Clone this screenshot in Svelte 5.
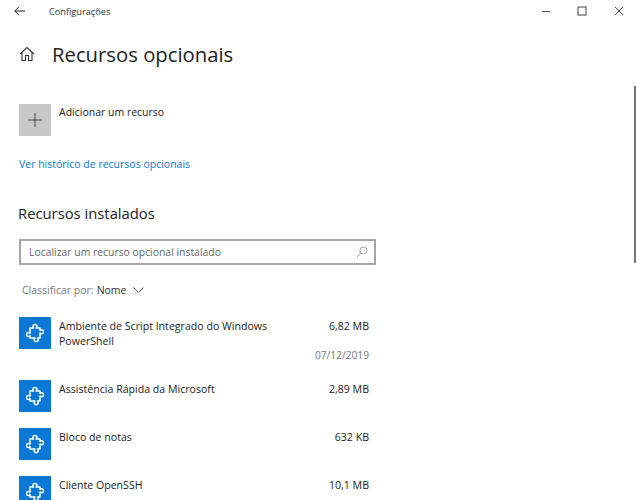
<script lang="ts">
  // Windows settings page: optional features list
  const features = [
    { name: 'Ambiente de Script Integrado do Windows PowerShell', size: '6,82 MB', date: '07/12/2019' },
    { name: 'Assistência Rápida da Microsoft', size: '2,89 MB' },
    { name: 'Bloco de notas', size: '632 KB' },
    { name: 'Cliente OpenSSH', size: '10,1 MB' }
  ];
</script>

<div class="window">
  <header class="titlebar">
    <svg class="back" width="11" height="10" viewBox="0 0 11 10" fill="none" stroke="#222" stroke-width="1">
      <path d="M11 5H.8M5 .7.8 5 5 9.3" />
    </svg>
    <span class="app-name">Configurações</span>
    <div class="controls">
      <svg width="10" height="10" viewBox="0 0 10 10" stroke="#555" fill="none"><path d="M1 5.5h8" /></svg>
      <svg width="10" height="10" viewBox="0 0 10 10" stroke="#444" fill="none"><rect x="1" y="1" width="8" height="8" /></svg>
      <svg width="10" height="10" viewBox="0 0 10 10" stroke="#444" fill="none"><path d="M1 1l8 8M9 1l-8 8" /></svg>
    </div>
  </header>

  <main class="content">
    <div class="page-head">
      <svg width="16" height="16" viewBox="0 0 16 16" fill="none" stroke="#333" stroke-width="1.1">
        <path d="M1 8 8 1.5 15 8M3 6.5V14.5H6.5V9.5H9.5V14.5H13V6.5" />
      </svg>
      <h1>Recursos opcionais</h1>
    </div>

    <div class="add">
      <div class="tile tile-add">
        <svg width="14" height="14" viewBox="0 0 14 14" stroke="#444" stroke-width="1"><path d="M7 0v14M0 7h14" /></svg>
      </div>
      <span class="add-label">Adicionar um recurso</span>
    </div>

    <a class="history" href="#history">Ver histórico de recursos opcionais</a>

    <h2>Recursos instalados</h2>

    <div class="search">
      <span>Localizar um recurso opcional instalado</span>
      <svg width="12" height="12" viewBox="0 0 12 12" fill="none" stroke="#999" stroke-width="0.9">
        <circle cx="7.5" cy="4.5" r="3.5" /><path d="M5 7 1 11" />
      </svg>
    </div>

    <div class="sort">
      <span class="sort-label">Classificar por:</span>
      <span class="sort-value">Nome</span>
      <svg width="11" height="6" viewBox="0 0 11 6" fill="none" stroke="#555"><path d="M.5.5l5 5 5-5" /></svg>
    </div>

    <ul class="list">
      {#each features as f}
        <li class="row">
          <div class="tile tile-blue">
            <svg width="18" height="20" viewBox="0 0 18 20" fill="none" stroke="#fff" stroke-width="1.5" stroke-linejoin="round">
              <path d="M7.8 5A2 2 0 1 1 10.2 5H14V7.6A2 2 0 1 1 14 10V15H11.4A2 2 0 1 1 9 15H4V12.6A2 2 0 1 1 4 10.2V5Z" />
            </svg>
          </div>
          <div class="row-name">{f.name}</div>
          <div class="row-meta">
            <div class="row-size">{f.size}</div>
            {#if f.date}
              <div class="row-date">{f.date}</div>
            {/if}
          </div>
        </li>
      {/each}
    </ul>
  </main>

  <div class="scrollbar"></div>
</div>

<style>
  :global(body) {
    margin: 0;
    background: #fff;
  }

  .window {
    position: relative;
    width: 637px;
    height: 500px;
    overflow: hidden;
    background: #fff;
    font-family: "Open Sans", "Noto Sans", sans-serif;
    color: #222;
  }

  .titlebar {
    display: flex;
    align-items: center;
    height: 20px;
    padding: 1px 0 1px 14px;
  }

  .app-name {
    margin-left: 24px;
    font-size: 9.2px;
    color: #333;
  }

  .controls {
    display: flex;
    gap: 26.5px;
    margin-left: auto;
    margin-right: 13.5px;
  }

  .content {
    width: 357px;
    padding-left: 19px;
  }

  .page-head {
    display: flex;
    align-items: center;
    gap: 17px;
    margin-top: 18px;
    height: 28px;
  }

  h1 {
    margin: 0;
    font-size: 20.3px;
    font-weight: 400;
    color: #222;
  }

  .add {
    display: flex;
    gap: 8px;
    margin-top: 36px;
  }

  .tile {
    display: flex;
    flex: none;
    align-items: center;
    justify-content: center;
    width: 32px;
    height: 32px;
  }

  .tile-add {
    background: #c8c8c8;
  }

  .add-label {
    margin-top: 1px;
    font-size: 10.5px;
    line-height: 15px;
  }

  .history {
    display: block;
    margin-top: 21px;
    font-size: 10.5px;
    line-height: 15px;
    color: #0a78d4;
    text-decoration: none;
  }

  h2 {
    margin: 31px 0 0 -1px;
    font-size: 14.8px;
    line-height: 20px;
    font-weight: 400;
    color: #222;
  }

  .search {
    display: flex;
    align-items: center;
    justify-content: space-between;
    box-sizing: border-box;
    height: 26px;
    margin-top: 16px;
    padding: 0 6px 0 8px;
    border: 2px solid #a6a6a6;
    font-size: 10.4px;
    color: #666;
  }

  .sort {
    display: flex;
    align-items: center;
    gap: 3px;
    margin: 17px 0 0 3px;
    height: 16px;
    font-size: 10.5px;
  }

  .sort-label {
    color: #777;
  }

  .sort-value {
    margin-right: 4px;
    font-weight: 500;
    color: #333;
  }

  .list {
    margin: 19px 0 0;
    padding: 0;
    list-style: none;
  }

  .row {
    display: flex;
    align-items: flex-start;
    margin-bottom: 16px;
  }

  .tile-blue {
    background: #0a78d4;
  }

  .row-name {
    width: 225px;
    margin: 1.5px 0 0 8px;
    font-size: 10.6px;
    line-height: 15px;
  }

  .row-meta {
    flex: 1;
    margin: 1.5px 7px 0 0;
    text-align: right;
    font-size: 10.6px;
    line-height: 15px;
  }

  .row-date {
    margin-top: 14px;
    margin-bottom: 1.5px;
    color: #777;
    font-size: 10.2px;
  }

  .scrollbar {
    position: absolute;
    top: 86px;
    right: 1px;
    width: 2px;
    height: 177px;
    background: #777;
  }
</style>
